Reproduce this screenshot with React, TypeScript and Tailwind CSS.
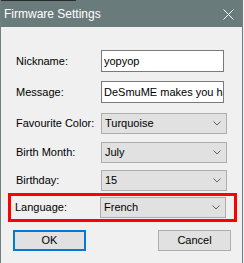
import React from 'react';

const Chevron = () => (
  <svg width="8" height="5" viewBox="0 0 8 5" className="shrink-0">
    <polyline points="0.5,0.5 4,4 7.5,0.5" fill="none" stroke="#5f5f5f" strokeWidth="1" />
  </svg>
);

const Combo: React.FC<{ value: string }> = ({ value }) => (
  <div className="w-[126px] h-[21px] bg-[#e1e1e1] border border-[#adadad] flex items-center justify-between pl-[3px] pr-[5px]">
    <span>{value}</span>
    <Chevron />
  </div>
);

const Field: React.FC<{ value: string }> = ({ value }) => (
  <div className="w-[123px] h-[22px] bg-white border border-[#7a7a7a] flex items-center px-[2px] overflow-hidden whitespace-nowrap">
    {value}
  </div>
);

const Row: React.FC<{ label: string; children: React.ReactNode }> = ({ label, children }) => (
  <div className="flex items-center pl-[15px]">
    <span className="w-[85px]">{label}</span>
    {children}
  </div>
);

export default function App() {
  return (
    <div
      className="w-[244px] h-[263px] bg-[#f0f0f0] text-black text-[11px] overflow-hidden"
      style={{ fontFamily: '"Liberation Sans", Arial, sans-serif' }}
    >
      <div className="w-[243px] h-full flex flex-col border-l border-r border-[#6f7f80]">
        <div className="flex h-[1px] shrink-0">
          <div className="w-[75px] bg-[#2b2b2b]" />
          <div className="flex-1 bg-[#6a7b7c]" />
        </div>
        <div className="h-[26px] shrink-0 bg-[#6a7b7c] flex items-center justify-between pl-[3px] pr-[8px]">
          <span className="text-white text-[12px]">Firmware Settings</span>
          <svg width="11" height="11" viewBox="0 0 11 11">
            <line x1="0.5" y1="0.5" x2="10.5" y2="10.5" stroke="#fff" strokeWidth="1" />
            <line x1="10.5" y1="0.5" x2="0.5" y2="10.5" stroke="#fff" strokeWidth="1" />
          </svg>
        </div>

        <div className="flex flex-col pt-[23px]">
          <Row label="Nickname:">
            <Field value="yopyop" />
          </Row>
          <div className="mt-[9px]">
            <Row label="Message:">
              <Field value="DeSmuME makes you happy!" />
            </Row>
          </div>
          <div className="mt-[10px]">
            <Row label="Favourite Color:">
              <Combo value="Turquoise" />
            </Row>
          </div>
          <div className="mt-[8px]">
            <Row label="Birth Month:">
              <Combo value="July" />
            </Row>
          </div>
          <div className="mt-[7px]">
            <Row label="Birthday:">
              <Combo value="15" />
            </Row>
          </div>

          <div className="mt-[2px] ml-[7px] w-[229px] h-[29px] border-[3px] border-[#ff0000] flex items-center pl-[4px]">
            <span className="w-[85px]">Language:</span>
            <Combo value="French" />
          </div>

          <div className="mt-[8px] flex items-start pl-[12px]">
            <button className="w-[73px] h-[21px] bg-[#e1e1e1] border-2 border-[#0078d7] flex items-center justify-center">
              OK
            </button>
            <button className="ml-[72px] w-[73px] h-[21px] bg-[#e1e1e1] border border-[#adadad] flex items-center justify-center">
              Cancel
            </button>
          </div>
        </div>
      </div>
    </div>
  );
}
